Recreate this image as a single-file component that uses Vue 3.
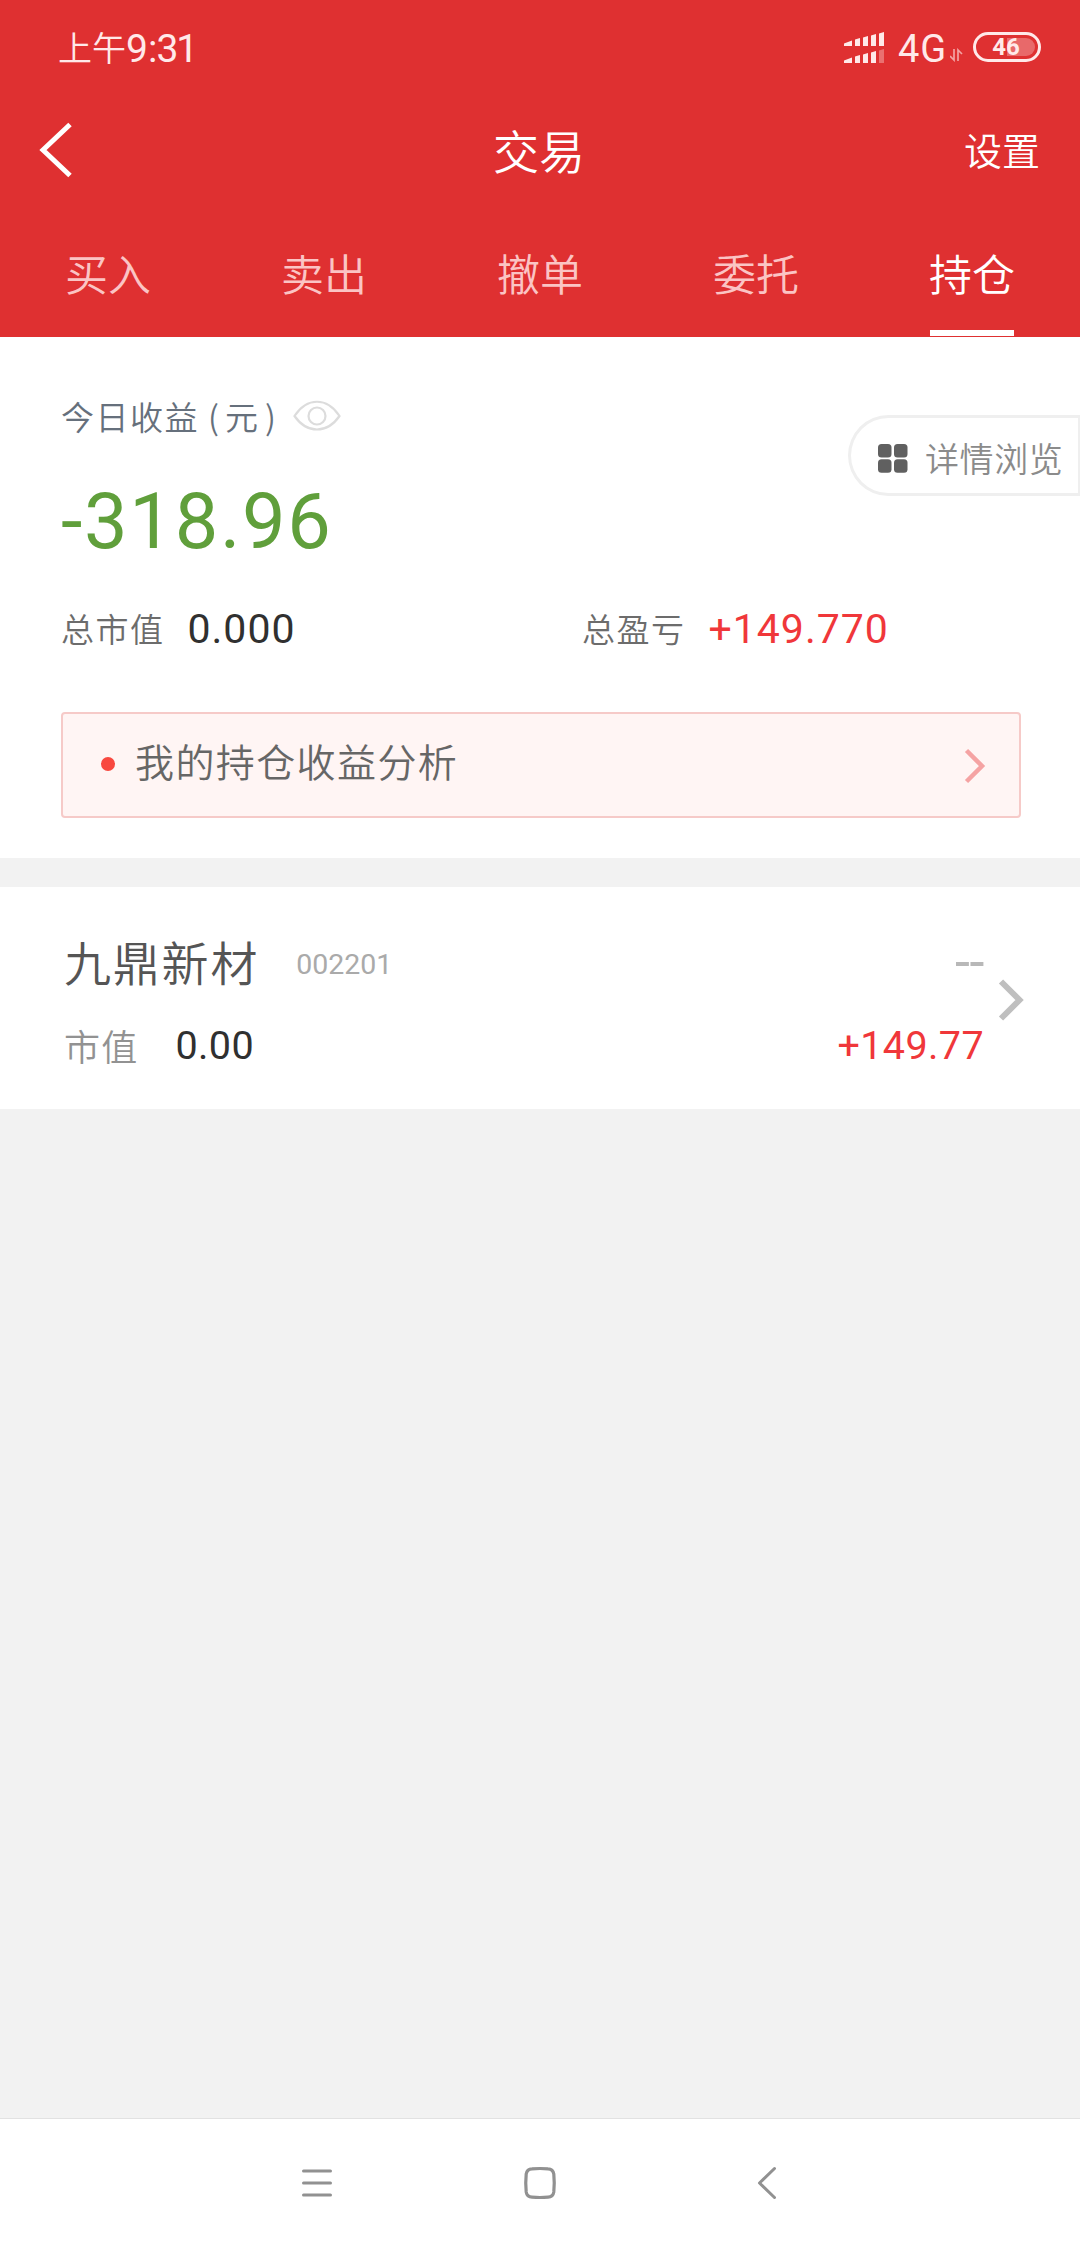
<script setup>
const tabs = ['买入', '卖出', '撤单', '委托', '持仓']
const active = '持仓'
</script>

<template>
  <div class="screen">
    <header class="top">
      <div class="status">
        <div class="time"><span class="ampm">上午</span><span class="clock">9<span class="colon">:</span>31</span></div>
        <div class="indicators">
          <svg class="signal" width="42" height="34" viewBox="0 0 42 34" fill="#ffe9e9">
            <path d="M0 11.500L8 8.500V14H0zM11 7.500L16 6V14H11zM19 5.500L24 4V14H19zM27 3.500L32 2V14H27zM35 1.500L40 0V14H35z" />
            <path d="M0 28.500L8 25.500V31H0zM11 24.500L16 23V31H11zM19 22.500L24 21V31H19zM27 20.500L32 19V31H27z" />
            <path d="M35 18.500L40 17V31H35z" opacity=".35" />
          </svg>
          <span class="network">4G</span>
          <svg class="data" width="14" height="14" viewBox="0 0 14 14" fill="none" stroke="#f3a3a3" stroke-width="1.700">
            <path d="M4 1V12L0 8M8 13V2L12 6" />
          </svg>
          <div class="battery"><i class="charge"></i><b class="percent">46</b></div>
        </div>
      </div>
      <nav class="bar">
        <svg class="back" width="34" height="56" viewBox="0 0 34 56" fill="none" stroke="#fff" stroke-width="5">
          <path d="M32 2.500L5 28L32 53.500" />
        </svg>
        <h1 class="title">交易</h1>
        <span class="settings">设置</span>
      </nav>
      <div class="tabs">
        <div v-for="t in tabs" :key="t" class="tab" :class="{ on: t === active }"><span class="tab-text">{{ t }}</span></div>
      </div>
    </header>

    <section class="summary">
      <div class="label-row">
        <span class="label today">今日收益<span class="paren open">(</span>元<span class="paren close">)</span></span>
        <svg class="eye" width="48" height="32" viewBox="0 0 48 32" fill="none" stroke="#dcdcdc" stroke-width="2.200">
          <path d="M1.500 16C14 -3 34 -3 46.500 16C34 34 14 34 1.500 16Z" />
          <circle cx="24" cy="16" r="8.500" />
        </svg>
      </div>
      <div class="income">-318.96</div>
      <div class="totals">
        <div class="total"><span class="label">总市值</span><span class="num">0.000</span></div>
        <div class="total"><span class="label">总盈亏</span><span class="num red">+149.770</span></div>
      </div>
      <div class="analysis">
        <i class="dot"></i>
        <span class="analysis-text">我的持仓收益分析</span>
        <svg class="go" width="22" height="36" viewBox="0 0 22 36" fill="none" stroke="#f5a3a3" stroke-width="4.500">
          <path d="M2.500 2.500L18 18L2.500 33.500" />
        </svg>
      </div>
      <div class="detail">
        <svg width="30" height="29" viewBox="0 0 30 29" fill="#606060">
          <rect width="13.500" height="13.500" rx="3.500" /><rect x="16" width="13.500" height="13.500" rx="3.500" />
          <rect y="15.200" width="13.500" height="13.500" rx="3.500" /><rect x="16" y="15.200" width="13.500" height="13.500" rx="3.500" />
        </svg>
        <span class="detail-text">详情浏览</span>
      </div>
    </section>

    <section class="holding">
      <div class="left">
        <div class="line first"><span class="name">九鼎新材</span><span class="code">002201</span></div>
        <div class="line second"><span class="mv">市值</span><span class="value">0.00</span></div>
      </div>
      <div class="right">
        <div class="line first dash">--</div>
        <div class="line second value red">+149.77</div>
      </div>
      <svg class="more" width="28" height="44" viewBox="0 0 28 44" fill="none" stroke="#bfbfbf" stroke-width="6">
        <path d="M3 3.500L21.500 22L3 40.500" />
      </svg>
    </section>

    <footer class="keys">
      <svg width="30" height="34" viewBox="0 0 30 34" stroke="#919191" stroke-width="3" stroke-linecap="round"><path d="M1.500 5H28.500M1.500 17H28.500M1.500 29H28.500" /></svg>
      <svg class="home" width="34" height="34" viewBox="0 0 34 34" fill="none" stroke="#919191" stroke-width="3.200"><path d="M9 2.800Q17 2.200 25 2.800Q30 3 30.800 8Q31.700 17 30.800 26Q30 31 25 31.200Q17 31.800 9 31.200Q4 31 3.200 26Q2.300 17 3.200 8Q4 3 9 2.800Z" /></svg>
      <svg width="20" height="34" viewBox="0 0 20 34" fill="none" stroke="#919191" stroke-width="3" stroke-linecap="round" stroke-linejoin="round"><path d="M17.500 2.500L2.500 17L17.500 31.500" /></svg>
    </footer>
  </div>
</template>

<style>
body { margin: 0; background: #f2f2f2; }
</style>

<style scoped>
.screen {
  width: 1080px;
  height: 2248px;
  display: flex;
  flex-direction: column;
  overflow: hidden;
  background: #f2f2f2;
  font-family: "Noto Sans CJK SC", sans-serif;
  font-weight: 350;
  white-space: nowrap;
}
svg { display: block; flex: none; }
.top { height: 337px; background: #df3031; color: #fff; flex: none; }
.status {
  height: 98px;
  display: flex;
  justify-content: space-between;
  align-items: center;
  padding: 0 39px 0 58px;
  color: #ffe9e9;
}
.time { display: flex; align-items: center; height: 50px; }
.ampm { font-size: 34px; line-height: 50px; padding-bottom: 4px; }
.clock { font: 400 39px/50px Roboto, sans-serif; letter-spacing: -2px; margin-left: 0; }
.colon { margin: 0 1px 0 2px; }
.indicators { display: flex; align-items: center; }
.network { font: 400 38px/50px Roboto, sans-serif; letter-spacing: .8px; margin-left: 12px; width: 52px; }
.data { margin: 12px 9px 0 0; }
.battery {
  position: relative;
  box-sizing: border-box;
  width: 68px;
  height: 30px;
  margin-top: -4px;
  border: 3px solid #ffe9e9;
  border-radius: 15px;
  display: flex;
  align-items: center;
  justify-content: center;
}
.charge { position: absolute; right: 3px; top: 3px; width: 28px; height: 18px; border-radius: 0 9px 9px 0; background: rgba(255, 255, 255, .28); }
.percent { position: relative; font: 700 24px/24px Roboto, sans-serif; padding-right: 2px; }
.bar { height: 106px; display: grid; grid-template-columns: 1fr auto 1fr; align-items: center; padding: 0 40px 0 38px; }
.back { margin-top: -3px; }
.title { margin: 0; font-size: 46px; font-weight: 350; line-height: 60px; padding-bottom: 5px; }
.settings { justify-self: end; font-size: 38px; line-height: 60px; padding-bottom: 4px; }
.tabs { display: flex; height: 133px; }
.tab { flex: 1; display: flex; justify-content: center; color: #fbc4c4; }
.tab-text { box-sizing: border-box; height: 132px; font-size: 43px; line-height: 136px; }
.on { color: #fff; }
.on .tab-text { width: 84px; border-bottom: 6px solid #fff; text-align: center; display: flex; justify-content: center; }
.summary { position: relative; height: 521px; box-sizing: border-box; padding: 52px 59px 0 61px; background: #fff; flex: none; }
.label-row { display: flex; align-items: center; height: 54px; }
.label { font-size: 33px; letter-spacing: 1.500px; line-height: 54px; padding-bottom: 2px; color: #6c6c6c; }
.today { color: #66707c; padding-bottom: 1px; }
.paren { display: inline-block; width: 27px; text-align: center; letter-spacing: 0; }
.open { box-sizing: border-box; padding-left: 3px; width: 26px; }
.close { box-sizing: border-box; padding-right: 5px; }
.eye { margin-left: 6px; margin-top: -1px; }
.income { margin-top: 25px; font: 400 77.500px/108px Roboto, sans-serif; letter-spacing: 1.700px; color: #609f3b; margin-left: 0; }
.totals { display: flex; margin-top: 21px; height: 64px; margin-bottom: 51px; }
.total { width: 521px; flex: none; display: flex; align-items: center; }
.num { margin-left: 23px; font: 400 41px/56px Roboto, sans-serif; letter-spacing: 1px; color: #303030; }
.num.red, .value.red { color: #f0373a; }
.analysis {
  display: flex;
  align-items: center;
  box-sizing: border-box;
  width: 960px;
  height: 106px;
  padding: 0 33px 0 38px;
  border: 2px solid #f6cac8;
  border-radius: 4px;
  background: #fff5f4;
}
.dot { width: 14px; height: 14px; margin-bottom: 2px; border-radius: 50%; background: #f8483f; }
.analysis-text { flex: 1; margin-left: 20px; font-size: 39px; letter-spacing: 1.400px; line-height: 60px; padding-bottom: 10px; color: #666; }
.go { margin-top: 2px; }
.detail {
  position: absolute;
  right: 0;
  top: 78px;
  width: 232px;
  height: 81px;
  box-sizing: border-box;
  border: 3px solid #efefef;
  border-right-width: 2px;
  border-radius: 41px 0 0 41px;
  display: flex;
  align-items: center;
  padding: 5px 0 0 27px;
}
.detail-text { margin-left: 17px; font-size: 34px; letter-spacing: .6px; line-height: 50px; color: #8b8b8b; }
.holding { display: flex; height: 222px; margin-top: 29px; background: #fff; box-sizing: border-box; padding: 0 54px 0 64px; flex: none; }
.left { flex: 1; }
.line { display: flex; align-items: center; }
.first { height: 76px; padding-top: 37px; }
.second { height: 80px; padding-top: 6px; }
.name { font-size: 47px; letter-spacing: 1.800px; line-height: 70px; padding-bottom: 2px; color: #555; }
.right .line { justify-content: flex-end; }
.code { margin-left: 37px; padding-top: 5px; font: 400 28.500px/40px Roboto, sans-serif; color: #aaa; }
.mv { font-size: 36px; letter-spacing: 1.200px; line-height: 54px; padding-bottom: 3px; color: #929292; }
.value { font: 400 39.500px/54px Roboto, sans-serif; letter-spacing: .4px; color: #303030; }
.mv + .value { margin-left: 37px; }
.dash { font: 400 54px/54px Roboto, sans-serif; letter-spacing: -.4px; color: #b8b8b8; }
.more { margin: 91px 0 0 14px; }
.keys {
  margin-top: auto;
  height: 130px;
  box-sizing: border-box;
  border-top: 1px solid #e2e2e2;
  background: #fff;
  display: flex;
  justify-content: space-between;
  align-items: center;
  padding: 0 303px 2px 302px;
}
.home { margin-right: 9px; }
</style>
